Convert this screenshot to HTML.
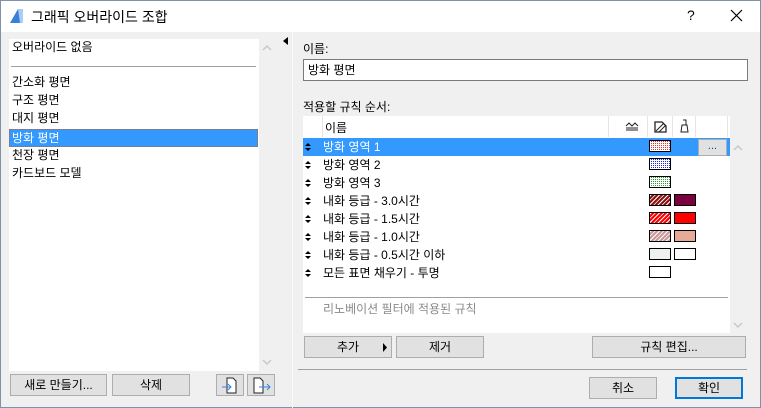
<!DOCTYPE html>
<html><head><meta charset="utf-8"><style>
*{box-sizing:border-box;margin:0;padding:0}
body{width:761px;height:408px;overflow:hidden;background:#f0f0f0;font-family:"Liberation Sans","Noto Sans CJK KR","NanumGothic",sans-serif;font-size:12px;color:#000;position:relative}
.a{position:absolute}
.win{left:0;top:0;width:761px;height:408px;border:1px solid #7f93a8}
.title{left:1px;top:1px;width:759px;height:31px;background:#fff}
.btn{position:absolute;background:#e1e1e1;border:1px solid #adadad;text-align:center;line-height:20px}
.row{position:absolute;left:0;width:427px;height:18px;line-height:18px}
.sw{position:absolute;width:22px;height:12px;border:1px solid #000}
</style></head><body>
<div class="a win"></div>
<div class="a title"></div>
<svg class="a" style="left:9px;top:8px" width="16" height="16"><polygon points="1,15 9,1 14,1 14,15" fill="#3b7fd9"/><polygon points="9,1 14,1 14,15 11,15" fill="#a9cdf5"/></svg>
<div class="a" style="left:31px;top:7px;font-size:14px">그래픽 오버라이드 조합</div>
<div class="a" style="left:687px;top:7px;font-size:14px">?</div>
<svg class="a" style="left:730px;top:9px" width="13" height="13"><path d="M1 1L12 12M12 1L1 12" stroke="#000" stroke-width="1.2"/></svg>

<div class="a" style="left:9px;top:39px;width:250px;height:332px;background:#fff"></div>
<div class="a" style="left:12px;top:38px;line-height:18px">오버라이드 없음</div>
<div class="a" style="left:11px;top:66px;width:245px;height:1px;background:#a0a0a0"></div>
<div class="a" style="left:12px;top:73px;line-height:18px">간소화 평면<br>구조 평면<br>대지 평면</div>
<div class="a" style="left:9px;top:129px;width:249px;height:18px;background:#3399ff;border:1px dotted #c06030;color:#fff;padding-left:2px;line-height:16px">방화 평면</div>
<div class="a" style="left:12px;top:146px;line-height:18px">천장 평면<br>카드보드 모델</div>
<svg class="a" style="left:262px;top:44px" width="10" height="8"><path d="M1 6L5 2L9 6" stroke="#c8c8c8" stroke-width="1.5" fill="none"/></svg>
<svg class="a" style="left:262px;top:358px" width="10" height="8"><path d="M1 2L5 6L9 2" stroke="#c8c8c8" stroke-width="1.5" fill="none"/></svg>
<div class="btn" style="left:10px;top:374px;width:97px;height:22px">새로 만들기...</div>
<div class="btn" style="left:112px;top:374px;width:78px;height:22px">삭제</div>
<div class="btn" style="left:216px;top:374px;width:28px;height:22px"><svg class="a" style="left:3px;top:2px" width="20" height="18"><path d="M7 1H13L16 4V16H7Z" fill="#fff" stroke="#222"/><path d="M2 10H11M8 7L11 10L8 13" stroke="#3b82e0" fill="none"/></svg></div>
<div class="btn" style="left:247px;top:374px;width:28px;height:22px"><svg class="a" style="left:3px;top:2px" width="22" height="18"><path d="M3 1H9L12 4V16H3Z" fill="#fff" stroke="#222"/><path d="M8 10H19M16 7L19 10L16 13" stroke="#3b82e0" fill="none"/></svg></div>

<div class="a" style="left:292px;top:32px;width:1px;height:376px;background:#fafafa"></div>
<svg class="a" style="left:283px;top:37px" width="6" height="9"><path d="M5 0V8L0 4Z" fill="#000"/></svg>

<div class="a" style="left:303px;top:40px">이름:</div>
<div class="a" style="left:303px;top:59px;width:445px;height:22px;background:#fff;border:1px solid #7a7a7a;padding-left:4px;line-height:20px">방화 평면</div>
<div class="a" style="left:303px;top:98px">적용할 규칙 순서:</div>
<div class="a" style="left:303px;top:116px;width:427px;height:217px;background:#fff">
 <div class="a" style="left:19px;top:0;width:1px;height:21px;background:#e5e5e5"></div>
 <div class="a" style="left:305px;top:0;width:1px;height:21px;background:#e5e5e5"></div>
 <div class="a" style="left:344px;top:0;width:1px;height:21px;background:#e5e5e5"></div>
 <div class="a" style="left:369px;top:0;width:1px;height:21px;background:#e5e5e5"></div>
 <div class="a" style="left:392px;top:0;width:1px;height:21px;background:#e5e5e5"></div>
 <div class="a" style="left:424px;top:0;width:1px;height:21px;background:#e5e5e5"></div>
 <div class="a" style="left:22px;top:3px">이름</div>
 <svg class="a" style="left:322px;top:5px" width="14" height="10"><path d="M1 5L4 2L7 5L10 2L13 5M1 7H13M1 9H13" stroke="#222" fill="none"/></svg>
 <svg class="a" style="left:351px;top:4px" width="13" height="13"><path d="M1 12V2H8L12 6V12Z" fill="none" stroke="#222" stroke-width="1.3"/><path d="M2 11L10 3M5 12L12 5" stroke="#222"/></svg>
 <svg class="a" style="left:376px;top:3px" width="11" height="14"><path d="M4 1H7V6M3 6H8L9 13H2Z" fill="none" stroke="#222"/></svg>
 <div class="row" style="top:22px;background:#3399ff;color:#fff"></div>
 <div class="a" style="left:395px;top:23px;width:29px;height:17px;background:#e1e1e1;border:1px solid #adadad;text-align:center;line-height:12px;font-size:11px;color:#0050a0">...</div>
</div>
<div class="a" style="left:305px;top:297px;width:423px;height:1px;background:#a0a0a0"></div>
<div class="a" style="left:323px;top:300px;color:#8a8a8a">리노베이션 필터에 적용된 규칙</div>
<svg class="a" style="left:733px;top:144px" width="10" height="8"><path d="M1 6L5 2L9 6" stroke="#c8c8c8" stroke-width="1.5" fill="none"/></svg>
<svg class="a" style="left:733px;top:321px" width="10" height="8"><path d="M1 2L5 6L9 2" stroke="#c8c8c8" stroke-width="1.5" fill="none"/></svg>
<div class="btn" style="left:304px;top:336px;width:88px;height:22px">추가<svg class="a" style="left:78px;top:6px" width="5" height="9"><path d="M0 0L4 4.5L0 9Z" fill="#000"/></svg></div>
<div class="btn" style="left:396px;top:336px;width:88px;height:22px">제거</div>
<div class="btn" style="left:592px;top:336px;width:154px;height:22px">규칙 편집...</div>
<div class="a" style="left:298px;top:369px;width:449px;height:1px;background:#a0a0a0"></div>
<div class="btn" style="left:589px;top:377px;width:68px;height:22px">취소</div>
<div class="btn" style="left:675px;top:377px;width:68px;height:22px;border:2px solid #0078d7;line-height:18px">확인</div>

<div class="a" style="left:303px;top:138px;width:427px;height:144px">
 <div class="row" style="top:0;color:#fff;padding-left:20px">방화 영역 1</div>
 <div class="row" style="top:18px;padding-left:20px">방화 영역 2</div>
 <div class="row" style="top:36px;padding-left:20px">방화 영역 3</div>
 <div class="row" style="top:54px;padding-left:20px">내화 등급 - 3.0시간</div>
 <div class="row" style="top:72px;padding-left:20px">내화 등급 - 1.5시간</div>
 <div class="row" style="top:90px;padding-left:20px">내화 등급 - 1.0시간</div>
 <div class="row" style="top:108px;padding-left:20px">내화 등급 - 0.5시간 이하</div>
 <div class="row" style="top:126px;padding-left:20px">모든 표면 채우기 - 투명</div>
 <svg class="a" style="left:0;top:0" width="10" height="144">
  <g fill="#000"><path d="M2 8L5 5L8 8ZM2 10L5 13L8 10Z"/><path transform="translate(0,18)" d="M2 8L5 5L8 8ZM2 10L5 13L8 10Z"/><path transform="translate(0,36)" d="M2 8L5 5L8 8ZM2 10L5 13L8 10Z"/><path transform="translate(0,54)" d="M2 8L5 5L8 8ZM2 10L5 13L8 10Z"/><path transform="translate(0,72)" d="M2 8L5 5L8 8ZM2 10L5 13L8 10Z"/><path transform="translate(0,90)" d="M2 8L5 5L8 8ZM2 10L5 13L8 10Z"/><path transform="translate(0,108)" d="M2 8L5 5L8 8ZM2 10L5 13L8 10Z"/><path transform="translate(0,126)" d="M2 8L5 5L8 8ZM2 10L5 13L8 10Z"/></g>
 </svg>
 <div class="sw" style="left:346px;top:2px;background:conic-gradient(#e33 0 25%,#fff 0 100%) 0 0/2px 2px"></div>
 <div class="sw" style="left:346px;top:20px;background:conic-gradient(#22e 0 25%,#fff 0 100%) 0 0/2px 2px"></div>
 <div class="sw" style="left:346px;top:38px;background:conic-gradient(#393 0 25%,#fff 0 100%) 0 0/2px 2px"></div>
 <div class="sw" style="left:346px;top:56px;background:repeating-linear-gradient(-45deg,#8b1010 0 2px,#fff 2px 3px)"></div>
 <div class="sw" style="left:371px;top:56px;background:#7a0040"></div>
 <div class="sw" style="left:346px;top:74px;background:repeating-linear-gradient(-45deg,#f00 0 2px,#fff 2px 3px)"></div>
 <div class="sw" style="left:371px;top:74px;background:#f00"></div>
 <div class="sw" style="left:346px;top:92px;background:repeating-linear-gradient(-45deg,#c89898 0 2px,#fff 2px 3px)"></div>
 <div class="sw" style="left:371px;top:92px;background:#e8aa98"></div>
 <div class="sw" style="left:346px;top:110px;background:#f0f0f0"></div>
 <div class="sw" style="left:371px;top:110px;background:#fff"></div>
 <div class="sw" style="left:346px;top:128px;background:#fff"></div>
</div>
</body></html>
